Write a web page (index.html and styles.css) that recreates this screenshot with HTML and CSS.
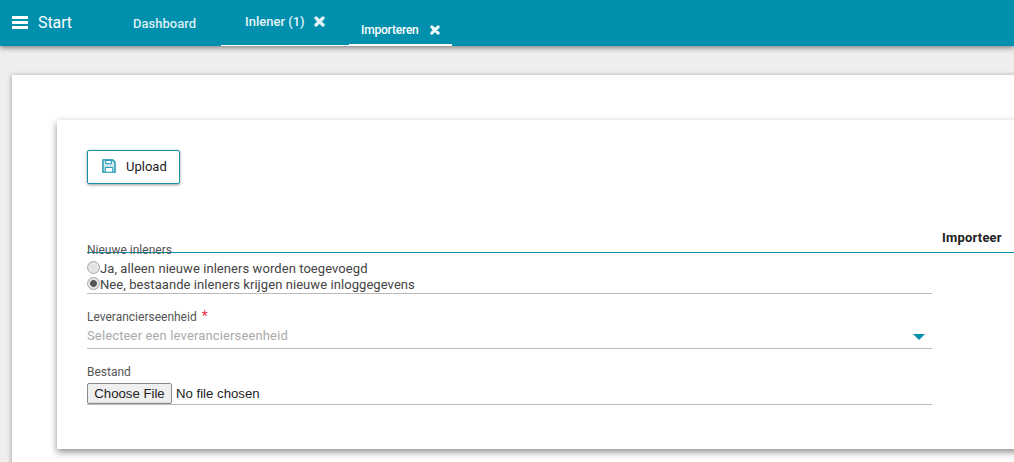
FILE: index.html
```html
<!DOCTYPE html>
<html lang="nl">
<head>
<meta charset="utf-8">
<title>Importeren</title>
<link rel="stylesheet" href="styles.css">
</head>
<body>
<header class="topbar">
  <div class="brand">
    <svg class="burger" width="16" height="13" viewBox="0 0 16 13"><path d="M0 0h16v3H0zM0 5h16v3H0zM0 10h16v3H0z" fill="#fff"/></svg>
    <span class="brand-text">Start</span>
  </div>
  <nav class="tabs">
    <a class="tab tab-dash">Dashboard</a>
    <a class="tab tab-inlener">Inlener (1)<svg class="close" width="11" height="11" viewBox="0 0 12 12"><path d="M2.2 2.2l7.6 7.6M9.8 2.2l-7.6 7.6" stroke="#dff1f5" stroke-width="3.6" stroke-linecap="round"/></svg></a>
    <a class="tab tab-import">Importeren<svg class="close" width="10" height="10" viewBox="0 0 12 12"><path d="M2.2 2.2l7.6 7.6M9.8 2.2l-7.6 7.6" stroke="#f2fafb" stroke-width="3.6" stroke-linecap="round"/></svg></a>
  </nav>
</header>
<main class="page">
  <section class="outer-card">
    <div class="inner-card">
      <button class="upload" type="button">
        <svg width="14" height="14" viewBox="0 0 15 15" fill="none"><path d="M1 1h10.5L14 3.5V14H1z" fill="#cfe9ef" stroke="#0a8fad" stroke-width="1.4"/><path d="M4 1.5h6v3.5H4z" fill="#fff" stroke="#0a8fad"/><path d="M3.5 13.5V9h8v4.5" fill="#fff" stroke="#0a8fad"/></svg>
        <span>Upload</span>
      </button>
      <div class="section-head"><strong>Importeer</strong></div>
      <form class="form">
        <div class="field field-radio">
          <div class="label label-first">Nieuwe inleners</div>
          <label class="radio"><input type="radio" name="n">Ja, alleen nieuwe inleners worden toegevoegd</label>
          <label class="radio"><input type="radio" name="n" checked>Nee, bestaande inleners krijgen nieuwe inloggegevens</label>
        </div>
        <div class="field field-select">
          <div class="label">Leverancierseenheid <span class="req">*</span></div>
          <div class="select"><span>Selecteer een leverancierseenheid</span><i class="caret"></i></div>
        </div>
        <div class="field field-file">
          <div class="label">Bestand</div>
          <div class="file"><span class="file-btn">Choose File</span><span class="file-name">No file chosen</span></div>
        </div>
      </form>
    </div>
  </section>
</main>
</body>
</html>
```
FILE: styles.css
```css
* { box-sizing: border-box; }
html, body { margin: 0; height: 100%; overflow: hidden; }
body { background: #eeeeee; font-family: Roboto, "Liberation Sans", sans-serif; color: #333; }

.topbar {
  height: 46px;
  background: #008fad;
  display: flex;
  box-shadow: 0 2px 5px rgba(0,0,0,.45);
  color: #fff;
  position: relative;
}
.brand { display: flex; align-items: center; width: 221px; padding: 0 0 0 12px; height: 46px; }
.burger { margin-right: 10px; margin-top: -2px; }
.brand-text { font-size: 16px; margin-top: -2px; letter-spacing: -.1px; }
.tabs { display: flex; height: 46px; }
.tab { display: flex; align-items: center; font-size: 13px; font-weight: 500; color: #d9eff4; }
.tab-dash { margin-left: -88px; width: 88px; letter-spacing: .02px; }
.tab-inlener { width: 128px; padding-left: 24px; border-bottom: 1px solid #fff; height: 46px; padding-bottom: 2px; color: #e6f5f8; }
.tab-import { width: 103px; padding: 16px 0 0 12px; border-bottom: 2px solid #fff; font-size: 12px; color: #fff; letter-spacing: -.2px; }
.close { margin-left: 9px; }
.tab-import .close { margin-left: 11px; }

.page { padding: 29px 0 0 12px; }
.outer-card {
  background: #fff;
  width: 1100px;
  height: 420px;
  padding: 45px 0 0 45px;
  box-shadow: 0 1px 5px rgba(0,0,0,.4);
}
.inner-card {
  background: #fff;
  width: 1040px;
  height: 329px;
  padding: 30px 0 0 30px;
  box-shadow: 0 3px 7px rgba(0,0,0,.45);
}
.upload {
  display: flex;
  align-items: center;
  gap: 10px;
  width: 93px;
  height: 34px;
  padding: 0 0 2px 14px;
  background: #fff;
  border: 1px solid #1a8fa8;
  border-radius: 2px;
  box-shadow: 0 1px 3px rgba(0,0,0,.4);
  font: 400 13px Roboto, sans-serif;
  color: #222;
}
.section-head {
  margin-top: 45px;
  height: 24px;
  border-bottom: 1px solid #008fad;
  padding-left: 855px;
  font-size: 13px;
  line-height: 18px;
  letter-spacing: .2px;
  color: #222;
}
.form { width: 845px; margin-top: -11px; }
.label { font-size: 12px; line-height: 14px; color: #555; }
.field { border-bottom: 1px solid #bbb; font-size: 13px; }
.field-radio { height: 52px; padding-top: 1px; }
.radio { display: flex; align-items: center; height: 15px; line-height: 15px; color: #444; letter-spacing: .07px; margin-top: 1px; }
.radio:first-of-type { margin-top: 4px; }
.radio input {
  appearance: none;
  margin: -3px 0 0;
  width: 13px;
  height: 13px;
  flex: none;
  border: 1px solid #a8a8a8;
  border-radius: 50%;
  background: #e4e4e4;
}
.radio input:checked { background: radial-gradient(circle, #555 0 3px, #e4e4e4 3.8px); }
.field-select { margin-top: 15px; height: 40px; }
.select { display: flex; justify-content: space-between; align-items: center; height: 18px; margin-top: 2px; color: #aaa; padding-right: 7px; letter-spacing: .14px; }
.caret { border: 6px solid transparent; border-top: 6px solid #008fad; border-bottom: 0; margin-top: 3px; }
.req { color: #f0334a; font-size: 14px; margin-left: 2px; }
.field-file { margin-top: 16px; height: 40px; }
.file { display: flex; align-items: center; margin-top: 4px; font: 13.2px "Liberation Sans", Arial, sans-serif; color: #222; }
.file-btn { width: 85px; height: 21px; line-height: 19px; text-align: center; background: #efefef; border: 1px solid #8a8a8a; border-radius: 2px; box-shadow: inset 0 -1px 0 #ddd; }
.file-name { margin-left: 4px; }
```
